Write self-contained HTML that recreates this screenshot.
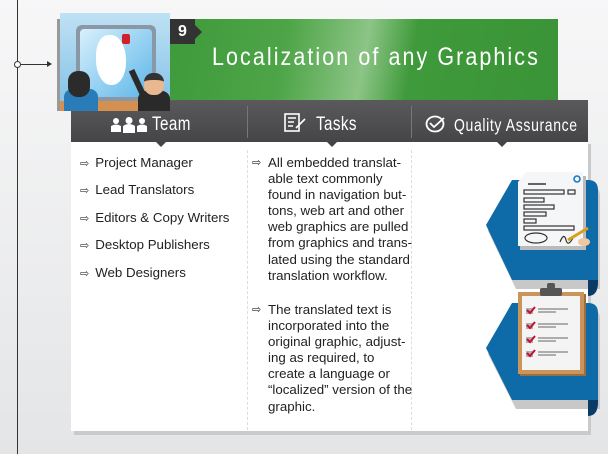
<!DOCTYPE html>
<html><head><meta charset="utf-8"><style>
*{margin:0;padding:0;box-sizing:border-box}
body{width:608px;height:454px;overflow:hidden;position:relative;background:linear-gradient(#f7f7f8,#e4e5e6);font-family:"Liberation Sans",sans-serif}
.abs{position:absolute}
.vline{left:17px;top:0;width:1px;height:454px;background:#333}
.panel{left:71px;top:140px;width:517px;height:291px;background:#fff;box-shadow:3px 4px 0 #c9cacb}
.hdr{left:71px;top:100px;width:517px;height:42px;background:linear-gradient(#5a5a5c,#454547);}
.green{left:170px;top:19px;width:388px;height:81px;background:linear-gradient(100deg,#3e9a3a 0%,#4ea548 30%,#8cc486 50%,#3f9a3b 62%,#3a9437 100%)}
.title{left:212px;top:43px;font-size:25px;color:#fff;letter-spacing:2.4px;transform:scaleX(.86);transform-origin:left;white-space:nowrap;font-weight:normal}
.num{left:170px;top:19px;width:25px;height:25px;background:#333;color:#fff;font-weight:bold;font-size:16px;text-align:center;line-height:25px}
.hl{color:#fff;font-size:19px;transform:scaleX(.8);transform-origin:left;white-space:nowrap;top:114px;letter-spacing:.5px}
.div{top:106px;width:1px;height:32px;background:#777}
.dot{top:150px;width:0;height:280px;border-left:1px dashed #ddd}
.tri{top:142px;width:0;height:0;border-left:5px solid transparent;border-right:5px solid transparent;border-top:5px solid #444}
.li{font-size:13.3px;color:#222;left:80px}
.li b{font-weight:normal;font-size:11px;margin-right:6px;color:#333}
.t2{left:252px;font-size:13.3px;line-height:16.1px;color:#222;width:170px}
.t2 .ar{position:absolute;left:0;font-size:11px}
.t2 p{margin-left:16px}
</style></head><body>
<div class="abs vline"></div>
<div class="abs" style="left:14px;top:61px;width:7px;height:7px;border:1px solid #333;border-radius:50%;background:#fff"></div>
<div class="abs" style="left:21px;top:64px;width:28px;height:1px;background:#333"></div>
<div class="abs" style="left:47px;top:61px;width:0;height:0;border-top:3px solid transparent;border-bottom:3px solid transparent;border-left:5px solid #333"></div>
<div class="abs green"></div>
<div class="abs title">Localization of any Graphics</div>
<div class="abs panel"></div>
<div class="abs hdr"></div>
<!-- image box -->
<div class="abs" style="left:57px;top:19px;width:6px;height:92px;background:#999"></div>
<div class="abs" style="left:60px;top:13px;width:110px;height:98px;background:linear-gradient(#bfe1f4,#7fc0e6);overflow:hidden">
 <div class="abs" style="left:16px;top:12px;width:80px;height:76px;border-radius:6px;background:#8a97a6"></div>
 <div class="abs" style="left:20px;top:16px;width:72px;height:68px;border-radius:4px;background:linear-gradient(135deg,#d8f0fc,#5cb6e8)"></div>
 <div class="abs" style="left:36px;top:22px;width:30px;height:50px;background:#fff;border-radius:40% 50% 45% 50%"></div>
 <div class="abs" style="left:62px;top:21px;width:8px;height:10px;background:#d0202a;border-radius:2px"></div>
 <div class="abs" style="left:0;top:88px;width:110px;height:10px;background:#d49050"></div>
 <div class="abs" style="left:4px;top:76px;width:34px;height:22px;background:#2a7cb8;border-radius:8px 8px 0 0"></div>
 <div class="abs" style="left:8px;top:58px;width:22px;height:26px;background:#2b2b2b;border-radius:10px"></div>
 <div class="abs" style="left:78px;top:78px;width:32px;height:22px;background:#2a2a2a;border-radius:8px 8px 0 0"></div>
 <div class="abs" style="left:84px;top:60px;width:20px;height:22px;background:#e8b890;border-radius:9px;border-top:7px solid #333"></div>
 <div class="abs" style="left:74px;top:56px;width:6px;height:26px;background:#2a2a2a;transform:rotate(-25deg)"></div>
</div>
<div class="abs num">9</div>
<div class="abs" style="left:195px;top:25px;border-top:7px solid transparent;border-bottom:7px solid transparent;border-left:7px solid #333"></div>
<!-- header -->
<svg class="abs" style="left:110px;top:117px" width="38" height="16" viewBox="0 0 38 16" fill="#fff"><circle cx="6" cy="4" r="3"/><path d="M1 15v-6q5-3 10 0v6z"/><circle cx="19" cy="3.5" r="3.5"/><path d="M13 16v-7q6-4 12 0v7z"/><circle cx="32" cy="4" r="3"/><path d="M27 15v-6q5-3 10 0v6z"/></svg>
<div class="abs hl" style="left:152px">Team</div>
<div class="abs div" style="left:247px"></div>
<svg class="abs" style="left:284px;top:113px" width="24" height="20" viewBox="0 0 24 20" fill="none" stroke="#fff" stroke-width="1.6"><rect x="1" y="1" width="14" height="17"/><path d="M4 5h8M4 9h6M4 13h5M12 15l9-9"/></svg>
<div class="abs hl" style="left:316px">Tasks</div>
<div class="abs div" style="left:411px"></div>
<svg class="abs" style="left:425px;top:115px" width="22" height="18" viewBox="0 0 22 18" fill="none" stroke="#fff" stroke-width="1.8"><ellipse cx="10" cy="9" rx="8.5" ry="7.5"/><path d="M5 8l4 4 10-9"/></svg>
<div class="abs hl" style="left:454px;top:115px;font-size:17.5px;letter-spacing:.8px">Quality Assurance</div>
<div class="abs tri" style="left:156px"></div>
<div class="abs tri" style="left:327px"></div>
<div class="abs tri" style="left:497px"></div>
<div class="abs dot" style="left:247px"></div>
<div class="abs dot" style="left:411px"></div>
<!-- col 1 -->
<div class="abs li" style="top:155px"><b>⇨</b>Project Manager</div>
<div class="abs li" style="top:182px"><b>⇨</b>Lead Translators</div>
<div class="abs li" style="top:210px"><b>⇨</b>Editors &amp; Copy Writers</div>
<div class="abs li" style="top:237px"><b>⇨</b>Desktop Publishers</div>
<div class="abs li" style="top:265px"><b>⇨</b>Web Designers</div>
<!-- col 2 -->
<div class="abs t2" style="top:155px"><span class="ar">⇨</span><p>All embedded translat-<br>able text commonly<br>found in navigation but-<br>tons, web art and other<br>web graphics are pulled<br>from graphics and trans-<br>lated using the standard<br>translation workflow.</p></div>
<div class="abs t2" style="top:302px"><span class="ar">⇨</span><p>The translated text is<br>incorporated into the<br>original graphic, adjust-<br>ing as required, to<br>create a language or<br>“localized” version of the<br>graphic.</p></div>
<!-- ribbons -->
<svg class="abs" style="left:480px;top:170px" width="128" height="250" viewBox="0 0 128 250">
 <path d="M6 57 L34 12 L108 12 Q118 12 118 22 L118 115 L34 115 Z" fill="#c8c8c8" transform="translate(2,4)"/>
 <path d="M6 55 L32 10 L108 10 Q118 10 118 20 L118 110 L32 110 Z" fill="#0f6aa8"/>
 <path d="M108 110 h10 v2 q0 14 -10 14z" fill="#0a3a66"/>
 <path d="M6 180 L34 135 L108 135 Q118 135 118 145 L118 235 L34 235 Z" fill="#c8c8c8" transform="translate(2,4)"/>
 <path d="M6 178 L32 133 L108 133 Q118 133 118 143 L118 230 L32 230 Z" fill="#0f6aa8"/>
 <path d="M108 230 h10 v2 q0 14 -10 14z" fill="#0a3a66"/>
 <!-- document -->
 <path d="M46 4 L104 4 L104 78 L38 78 L38 14 Z" fill="#bbb" transform="translate(2,2)"/>
 <path d="M46 2 L103 2 L103 76 L38 76 L38 12 Z" fill="#f5f6f7"/>
 <g fill="none" stroke="#333" stroke-width="1.2"><rect x="44" y="20" width="40" height="4"/><rect x="88" y="20" width="7" height="4"/><rect x="44" y="28" width="20" height="4"/><rect x="44" y="35" width="30" height="4"/><rect x="44" y="42" width="22" height="4"/><rect x="44" y="49" width="12" height="4"/><rect x="44" y="56" width="50" height="4"/><ellipse cx="56" cy="68" rx="11" ry="5"/><path d="M80 72q4-10 6-2t8-4"/></g>
 <path d="M48 14h18" stroke="#333" stroke-width="1.5"/>
 <circle cx="97" cy="9" r="3" fill="none" stroke="#1a78c2" stroke-width="1.6"/>
 <path d="M88 70 L108 58" stroke="#d8a020" stroke-width="3"/>
 <ellipse cx="104" cy="72" rx="6" ry="4" fill="#f0c8a0"/>
 <!-- clipboard -->
 <rect x="40" y="124" width="66" height="82" fill="#9b6f42"/>
 <rect x="38" y="122" width="66" height="82" fill="#c9955a"/>
 <rect x="42" y="126" width="58" height="74" fill="#f4f4f4"/>
 <rect x="60" y="118" width="22" height="8" rx="2" fill="#555"/>
 <rect x="67" y="113" width="8" height="6" rx="2" fill="#555"/>
 <g fill="#b0b0b0"><rect x="46" y="138" width="7" height="6"/><rect x="46" y="153" width="7" height="6"/><rect x="46" y="167" width="7" height="6"/><rect x="46" y="181" width="7" height="6"/></g>
 <g fill="none" stroke="#c8102e" stroke-width="2"><path d="M47 140l3 3 5-6M47 155l3 3 5-6M47 169l3 3 5-6M47 183l3 3 5-6"/></g>
 <g stroke="#666" stroke-width="1"><path d="M58 139h30M58 142h18M58 154h30M58 157h18M58 168h30M58 171h18M58 182h30M58 185h18"/></g>
</svg>
</body></html>
